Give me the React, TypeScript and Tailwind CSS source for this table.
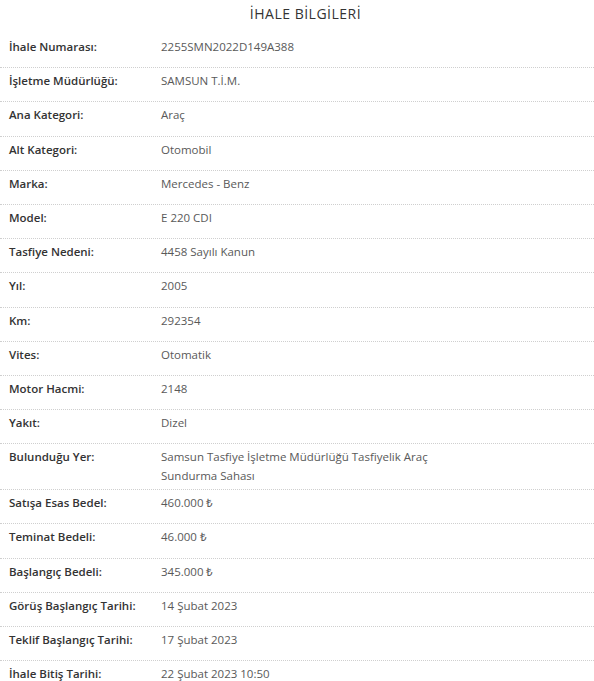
const rows: { label: string; value: string }[] = [
    { label: 'İhale Numarası:', value: '2255SMN2022D149A388' },
    { label: 'İşletme Müdürlüğü:', value: 'SAMSUN T.İ.M.' },
    { label: 'Ana Kategori:', value: 'Araç' },
    { label: 'Alt Kategori:', value: 'Otomobil' },
    { label: 'Marka:', value: 'Mercedes - Benz' },
    { label: 'Model:', value: 'E 220 CDI' },
    { label: 'Tasfiye Nedeni:', value: '4458 Sayılı Kanun' },
    { label: 'Yıl:', value: '2005' },
    { label: 'Km:', value: '292354' },
    { label: 'Vites:', value: 'Otomatik' },
    { label: 'Motor Hacmi:', value: '2148' },
    { label: 'Yakıt:', value: 'Dizel' },
    { label: 'Bulunduğu Yer:', value: 'Samsun Tasfiye İşletme Müdürlüğü Tasfiyelik Araç Sundurma Sahası' },
    { label: 'Satışa Esas Bedel:', value: '460.000 ₺' },
    { label: 'Teminat Bedeli:', value: '46.000 ₺' },
    { label: 'Başlangıç Bedeli:', value: '345.000 ₺' },
    { label: 'Görüş Başlangıç Tarihi:', value: '14 Şubat 2023' },
    { label: 'Teklif Başlangıç Tarihi:', value: '17 Şubat 2023' },
    { label: 'İhale Bitiş Tarihi:', value: '22 Şubat 2023 10:50' },
];

export default function App() {
    return (
        <div className="w-[594px] bg-white font-['Open_Sans',sans-serif] text-[#333]">
            <h2 className="pl-[17px] pt-[4px] h-[34px] text-center text-[14px] leading-[20px] tracking-[0.5px] text-[#333]">
                İHALE BİLGİLERİ
            </h2>
            <div>
                {rows.map((r) => (
                    <div
                        key={r.label}
                        className="flex items-start min-h-[34.2px] pt-[3px] pb-[4px] pl-[9px] border-b border-dotted border-[#cfcfcf] text-[11.5px] leading-[19px]"
                    >
                        <div className="w-[152px] shrink-0 font-semibold text-[#333]">{r.label}</div>
                        <div className="w-[290px] text-[#595959]">{r.value}</div>
                    </div>
                ))}
            </div>
        </div>
    );
}
